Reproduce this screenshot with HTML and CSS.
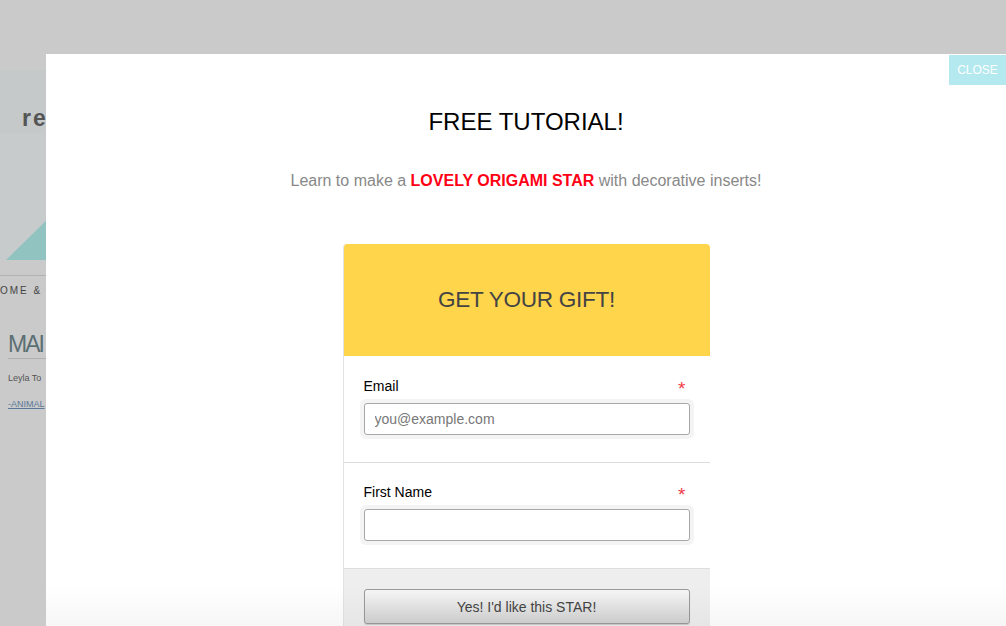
FILE: index.html
```html
<!DOCTYPE html>
<html lang="en">
<head>
    <meta charset="UTF-8">
    <title>Free Tutorial</title>
    <link rel="stylesheet" href="styles.css">
</head>
<body>
    <div id="site">
        <div class="site-head"><span class="logo">re</span></div>
        <div class="site-hero">
            <svg class="hero-tri" width="60" height="127" viewBox="0 0 60 127">
                <polygon points="6,127 60,74 60,127" fill="#91c3c0"/>
            </svg>
        </div>
        <div class="site-nav">OME &amp; I</div>
        <div class="site-post">
            <h2>MAI</h2>
            <p class="by">Leyla To</p>
            <a class="cat" href="#">-ANIMAL</a>
        </div>
    </div>

    <div id="modal">
        <a class="close" href="#">CLOSE</a>
        <h1>FREE TUTORIAL!</h1>
        <p class="lead">Learn to make a <b>LOVELY ORIGAMI STAR</b> with decorative inserts!</p>

        <form class="card">
            <div class="card-head">GET YOUR GIFT!</div>
            <div class="field">
                <div class="label-row"><label>Email</label><span class="req">*</span></div>
                <div class="halo"><input type="text" placeholder="you@example.com"></div>
            </div>
            <div class="field">
                <div class="label-row"><label>First Name</label><span class="req">*</span></div>
                <div class="halo"><input type="text"></div>
            </div>
            <div class="card-foot">
                <button type="button">Yes! I'd like this STAR!</button>
            </div>
        </form>
        <div class="fade"></div>
    </div>
</body>
</html>
```

FILE: styles.css
```css
*{
    margin: 0;
    padding: 0;
    box-sizing: border-box;
}
body{
    background: #cacaca;
    font-family: "Liberation Sans", Arial, sans-serif;
    width: 1006px;
    height: 626px;
    overflow: hidden;
    position: relative;
}
#site{
    padding-top: 70px;
}
.site-head{
    height: 63px;
    background: #c5c9c9;
    padding: 35px 0 0 22px;
}
.logo{
    font-size: 23px;
    font-weight: bold;
    color: #555;
    letter-spacing: 2px;
}
.site-hero{
    height: 127px;
    background: #c7cbcb;
    display: flex;
    justify-content: flex-end;
    width: 46px;
    overflow: hidden;
}
.hero-tri{
    flex: none;
    margin-right: -14px;
}
.site-nav{
    margin-top: 15px;
    border-top: 1px solid #b3b3b3;
    padding-top: 9px;
    font-size: 10px;
    letter-spacing: 2px;
    color: #444;
}
.site-post{
    padding: 35px 0 0 8px;
}
.site-post h2{
    font-weight: normal;
    font-size: 23px;
    letter-spacing: -2px;
    line-height: 26px;
    color: #5b6f74;
    border-bottom: 1px solid #b0b0b0;
    padding-bottom: 1px;
    width: 60px;
}
.by{
    font-size: 9px;
    color: #555;
    margin-top: 14px;
}
.cat{
    display: block;
    font-size: 9px;
    color: #5b7898;
    margin-top: 16px;
}

#modal{
    position: absolute;
    left: 46px;
    top: 54px;
    right: 0;
    bottom: 0;
    background: #fff;
    padding-top: 54px;
    text-align: center;
}
.close{
    position: absolute;
    top: 1px;
    right: 0;
    width: 57px;
    height: 30px;
    line-height: 30px;
    background: #b3e9ef;
    color: #fff;
    font-size: 12px;
    text-decoration: none;
}
#modal h1{
    font-weight: normal;
    font-size: 24px;
    line-height: 28px;
    color: #000;
}
.lead{
    margin-top: 35px;
    font-size: 16px;
    line-height: 20px;
    color: #888;
}
.lead b{
    color: #ff0015;
}
.card{
    width: 367px;
    margin: 53px auto 0;
    text-align: left;
    border-left: 1px solid #e3e3e3;
    border-radius: 4px 4px 0 0;
    overflow: hidden;
}
.card-head{
    height: 112px;
    background: #ffd54b;
    color: #444;
    font-size: 22.6px;
    letter-spacing: -0.3px;
    display: flex;
    align-items: center;
    justify-content: center;
}
.field{
    padding: 22px 20px 23px;
    border-bottom: 1px solid #dddddd;
}
.field + .field{
    padding-top: 21px;
}
.label-row{
    display: flex;
    justify-content: space-between;
    align-items: center;
    height: 16px;
    font-size: 14px;
    color: #000;
    padding-right: 4px;
}
.req{
    color: #f03a47;
    font-size: 19px;
    line-height: 16px;
    padding-top: 5px;
}
.halo{
    margin: 5px -4px 0;
    padding: 4px;
    background: #f4f4f4;
    border-radius: 6px;
}
.halo input{
    display: block;
    width: 100%;
    height: 32px;
    border: 1px solid #a8a8a8;
    border-radius: 3px;
    padding: 0 10px;
    font-family: inherit;
    font-size: 14px;
    color: #333;
    background: #fff;
    outline: none;
}
.halo input::placeholder{
    color: #777;
}
.card-foot{
    background: #eeeeee;
    padding: 20px 20px 20px;
}
.card-foot button{
    display: block;
    width: 100%;
    height: 35px;
    border: 1px solid #9a9a9a;
    border-radius: 3px;
    background: linear-gradient(#f6f6f6, #d3d3d3);
    box-shadow: 0 1px 1px rgba(0,0,0,0.15);
    font-family: inherit;
    font-size: 14px;
    color: #444;
    cursor: pointer;
}
.fade{
    position: absolute;
    left: 0;
    right: 0;
    bottom: 0;
    height: 40px;
    background: linear-gradient(rgba(0,0,0,0), rgba(0,0,0,0.035));
    pointer-events: none;
}
```
